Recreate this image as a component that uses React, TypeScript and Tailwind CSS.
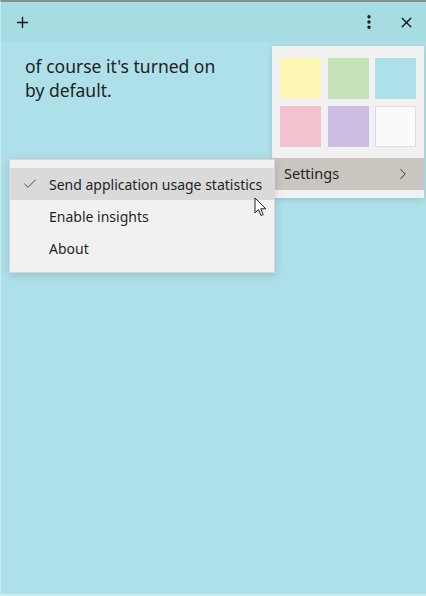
import { Check, ChevronRight, EllipsisVertical, Plus, X } from "lucide-react";

const swatches = [
  "bg-[#fbf6b4]",
  "bg-[#c6e2b8]",
  "bg-[#aee0ea]",
  "bg-[#f3c2cf]",
  "bg-[#cdbde2]",
  "bg-[#fafafa]",
];

const settingsItems = [
  { label: "Send application usage statistics", checked: true },
  { label: "Enable insights", checked: false },
  { label: "About", checked: false },
];

function Cursor() {
  return (
    <svg width="14" height="21" viewBox="0 0 14 21" className="absolute left-[254px] top-[197px]">
      <path
        d="M1 1 L1 16 L4.5 12.5 L7 18.5 L9.2 17.6 L6.8 11.8 L11.8 11.8 Z"
        fill="#ffffff"
        stroke="#222222"
        strokeWidth="1"
        strokeLinejoin="round"
      />
    </svg>
  );
}

export default function App() {
  return (
    <div
      className="relative w-[426px] h-[596px] overflow-hidden bg-[#aee0ea] text-[#1f1f1f]"
      style={{ fontFamily: '"Noto Sans", "Open Sans", sans-serif' }}
    >
      <div className="flex h-full flex-col border-t-2 border-t-[#8c8c8c] border-l border-l-[#c4ecf2] border-b-2 border-b-[#c8eef3]">
        <div className="flex h-[40px] items-center bg-[#a6dde3] pl-[13px] pr-[11px]">
          <Plus size={17} strokeWidth={2} className="text-[#1a1a1a]" />
          <div className="flex-1" />
          <EllipsisVertical size={18} strokeWidth={2.5} className="text-[#1a1a1a]" />
          <X size={17} strokeWidth={2} className="ml-[20px] text-[#1a1a1a]" />
        </div>
        <div className="flex-1 pl-[24px] pt-[12px] text-[17.5px] leading-[24px] text-[#222]">
          <p>of course it's turned on</p>
          <p>by default.</p>
        </div>
      </div>

      {/* colour + settings menu */}
      <div className="absolute left-[272px] top-[46px] w-[152px] bg-[#f1f1f1] shadow-[0_2px_6px_rgba(0,0,0,0.12)]">
        <div className="grid grid-cols-3 gap-[7px] px-[8px] pt-[12px] pb-[11px]">
          {swatches.map((s, i) => (
            <div
              key={i}
              className={`h-[41px] w-[41px] ${s} ${i === 5 ? "border border-[#dcdcdc]" : ""}`}
            />
          ))}
        </div>
        <div className="flex h-[32px] items-center bg-[#c9c6c0] pl-[12px] pr-[12px] text-[14.5px] text-[#1f1f1f]">
          <span className="flex-1">Settings</span>
          <ChevronRight size={18} strokeWidth={1.2} />
        </div>
        <div className="h-[8px]" />
      </div>

      {/* settings submenu */}
      <div className="absolute left-[9px] top-[159px] w-[266px] border border-[#d8d8d8] bg-[#f1f1f1] pt-[8px] pb-[8px] shadow-[0_2px_8px_rgba(0,0,0,0.15)]">
        {settingsItems.map((item) => (
          <div
            key={item.label}
            className={`flex h-[32px] items-center text-[14px] text-[#1f1f1f] ${item.checked ? "bg-[#dadada]" : ""}`}
          >
            <span className="flex w-[39px] justify-center pl-[1px]">
              {item.checked && <Check size={16} strokeWidth={1.2} />}
            </span>
            <span>{item.label}</span>
          </div>
        ))}
      </div>

      <Cursor />
    </div>
  );
}
